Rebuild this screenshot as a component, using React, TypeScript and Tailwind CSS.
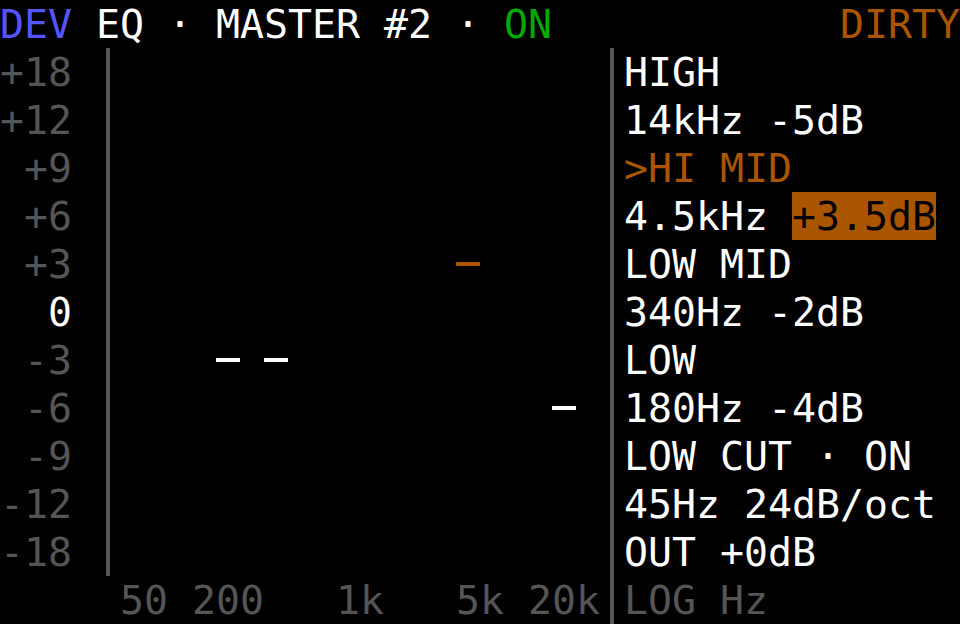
import React from 'react'

// CGA-ish palette used by the device screen
const GRAY = 'text-[#555555]'

const axisLabels = ['+18', '+12', ' +9', ' +6', ' +3', '  0', ' -3', ' -6', ' -9', '-12', '-18']

interface Marker {
  col: string
  row: string
  color: string
}

// graph cells are 24x48, markers sit mid-cell
const markers: Marker[] = [
  { col: 'col-start-[15]', row: 'row-start-[5]', color: 'bg-[#aa5500]' },
  { col: 'col-start-[5]', row: 'row-start-[7]', color: 'bg-white' },
  { col: 'col-start-[7]', row: 'row-start-[7]', color: 'bg-white' },
  { col: 'col-start-[19]', row: 'row-start-[8]', color: 'bg-white' },
]

function VLine({ height }: { height: string }) {
  return (
    <div className="w-[24px] shrink-0">
      <div className={`ml-[10px] w-[4px] bg-[#555555] ${height}`} />
    </div>
  )
}

export default function App() {
  return (
    <div
      className="w-[960px] h-[624px] overflow-hidden bg-black text-white text-[39.86px] leading-[48px] whitespace-pre"
      style={{ fontFamily: '"DejaVu Sans Mono", "Liberation Mono", monospace' }}
    >
      {/* status line */}
      <div className="flex h-12 justify-between">
        <div>
          <span className="text-[#5555ff]">DEV</span>
          <span> EQ · MASTER #2 · </span>
          <span className="text-[#00aa00]">ON</span>
        </div>
        <div className="text-[#aa5500]">DIRTY</div>
      </div>

      <div className="flex h-[576px]">
        {/* dB axis */}
        <div className="w-[96px] shrink-0 flex flex-col">
          {axisLabels.map((l) => (
            <div key={l} className={`h-12 ${l.trim() === '0' ? 'text-white' : GRAY}`}>
              {l}
            </div>
          ))}
        </div>

        <VLine height="h-[528px]" />

        {/* graph + freq axis */}
        <div className="w-[480px] shrink-0 flex flex-col">
          <div className="grid grid-cols-[repeat(20,24px)] grid-rows-[repeat(11,48px)]">
            {markers.map((m, i) => (
              <div key={i} className={`${m.col} ${m.row} flex items-center`}>
                <div className={`h-[4px] w-[24px] ${m.color}`} />
              </div>
            ))}
          </div>
          <div className={`h-12 ${GRAY}`}>50 200   1k   5k 20k</div>
        </div>

        <VLine height="h-[576px]" />

        {/* band params */}
        <div className="flex-1 flex flex-col">
          <div className="h-12">HIGH</div>
          <div className="h-12">14kHz -5dB</div>
          <div className="h-12 text-[#aa5500]">&gt;HI MID</div>
          <div className="h-12">
            <span>4.5kHz </span>
            <span className="bg-[#aa5500] text-black inline-block h-12">+3.5dB</span>
          </div>
          <div className="h-12">LOW MID</div>
          <div className="h-12">340Hz -2dB</div>
          <div className="h-12">LOW</div>
          <div className="h-12">180Hz -4dB</div>
          <div className="h-12">LOW CUT · ON</div>
          <div className="h-12">45Hz 24dB/oct</div>
          <div className="h-12">OUT +0dB</div>
          <div className={`h-12 ${GRAY}`}>LOG Hz</div>
        </div>
      </div>
    </div>
  )
}
